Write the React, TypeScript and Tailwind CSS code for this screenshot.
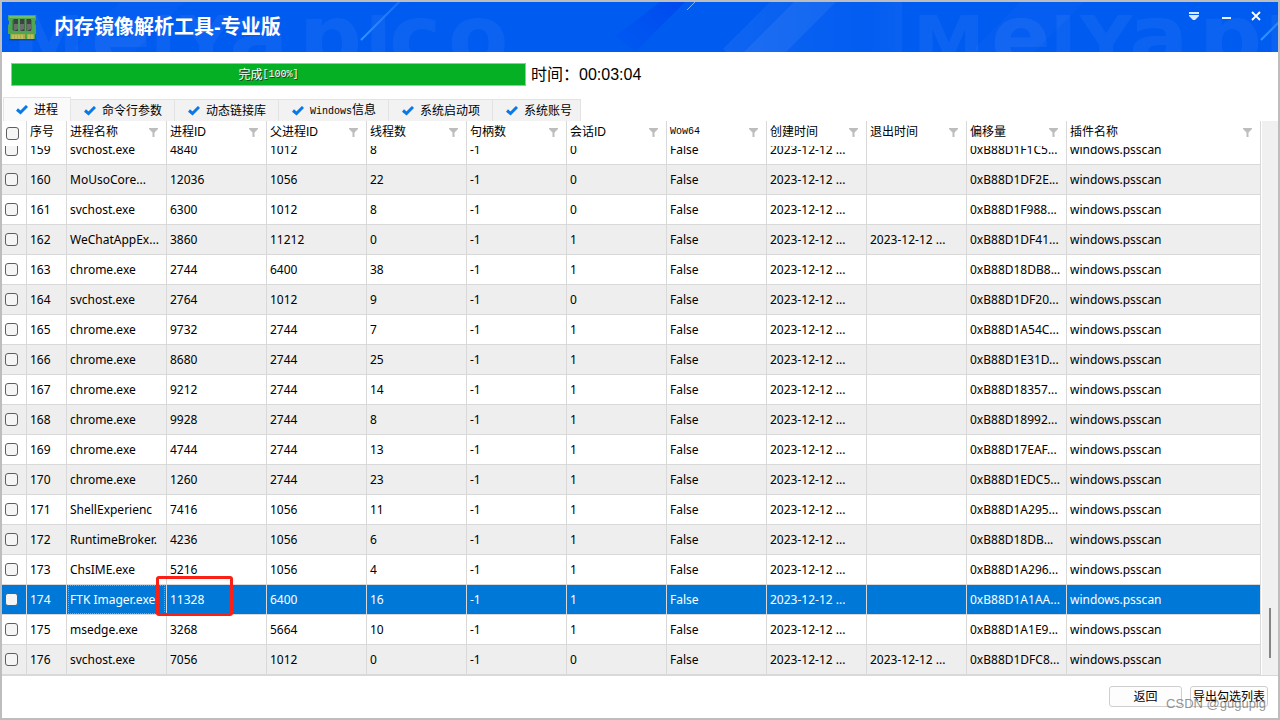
import React from "react";

const tabs = [
  { label: "进程" },
  { label: "命令行参数" },
  { label: "动态链接库" },
  { latin: "Windows", label: "信息" },
  { label: "系统启动项" },
  { label: "系统账号" },
];

const columns = [
  { label: "序号", filter: false },
  { label: "进程名称", filter: true },
  { label: "进程ID", filter: true },
  { label: "父进程ID", filter: true },
  { label: "线程数", filter: true },
  { label: "句柄数", filter: true },
  { label: "会话ID", filter: true },
  { label: "Wow64", filter: true, latin: true },
  { label: "创建时间", filter: true },
  { label: "退出时间", filter: true },
  { label: "偏移量", filter: true },
  { label: "插件名称", filter: true },
];

// no, name, pid, ppid, threads, session, exit time, offset
const processes = [
  ["159", "svchost.exe", "4840", "1012", "8", "0", "", "0xB88D1F1C5..."],
  ["160", "MoUsoCore...", "12036", "1056", "22", "0", "", "0xB88D1DF2E..."],
  ["161", "svchost.exe", "6300", "1012", "8", "0", "", "0xB88D1F988..."],
  ["162", "WeChatAppEx...", "3860", "11212", "0", "1", "2023-12-12 ...", "0xB88D1DF41..."],
  ["163", "chrome.exe", "2744", "6400", "38", "1", "", "0xB88D18DB8..."],
  ["164", "svchost.exe", "2764", "1012", "9", "0", "", "0xB88D1DF20..."],
  ["165", "chrome.exe", "9732", "2744", "7", "1", "", "0xB88D1A54C..."],
  ["166", "chrome.exe", "8680", "2744", "25", "1", "", "0xB88D1E31D..."],
  ["167", "chrome.exe", "9212", "2744", "14", "1", "", "0xB88D18357..."],
  ["168", "chrome.exe", "9928", "2744", "8", "1", "", "0xB88D18992..."],
  ["169", "chrome.exe", "4744", "2744", "13", "1", "", "0xB88D17EAF..."],
  ["170", "chrome.exe", "1260", "2744", "23", "1", "", "0xB88D1EDC5..."],
  ["171", "ShellExperienc", "7416", "1056", "11", "1", "", "0xB88D1A295..."],
  ["172", "RuntimeBroker.", "4236", "1056", "6", "1", "", "0xB88D18DB..."],
  ["173", "ChsIME.exe", "5216", "1056", "4", "1", "", "0xB88D1A296..."],
  ["174", "FTK Imager.exe", "11328", "6400", "16", "1", "", "0xB88D1A1AA..."],
  ["175", "msedge.exe", "3268", "5664", "10", "1", "", "0xB88D1A1E9..."],
  ["176", "svchost.exe", "7056", "1012", "0", "0", "2023-12-12 ...", "0xB88D1DFC8..."],
];

const SELECTED = "174";

const brandLetters = [
  { ch: "M", x: 11, size: 72 },
  { ch: "e", x: 89, size: 88 },
  { ch: "I", x: 148, size: 72 },
  { ch: "Y", x: 178, size: 72 },
  { ch: "a", x: 227, size: 88 },
  { ch: "p", x: 297, size: 88 },
  { ch: "I", x: 363, size: 72 },
  { ch: "c", x: 387, size: 88 },
  { ch: "o", x: 446, size: 88 },
];

const BannerTile = ({ x }: { x: number }) => (
  <g transform={`translate(${x} 0)`}>
    <polygon points="118,0 182,0 132,50 76,50 73,46" fill="#fff" opacity="0.02" />
    <polygon points="658,0 683,0 633,50 614,34" fill="url(#shade)" />
    <polygon points="768,0 900,0 900,50 724,50 721,47" fill="url(#haze)" />
    <polygon points="792,0 834,0 784,50 742,50" fill="#fff" opacity="0.06" />
    {brandLetters.map((l) => (
      <text
        key={l.x}
        x={l.x}
        y="65"
        fontSize={l.size}
        fontWeight="700"
        fontFamily="'DejaVu Sans', sans-serif"
        fill="#fff"
        opacity="0.05"
      >
        {l.ch}
      </text>
    ))}
    <line x1="359" y1="38" x2="398" y2="-1" stroke="url(#streak)" strokeWidth="2" />
    <line x1="685" y1="8" x2="694" y2="-1" stroke="#7db4ff" strokeWidth="1" />
  </g>
);

const Banner = () => (
  <svg className="absolute inset-0 size-full" aria-hidden="true">
    <defs>
      <linearGradient id="streak" x1="0" y1="1" x2="1" y2="0">
        <stop offset="0" stopColor="#2f97ff" />
        <stop offset="1" stopColor="#1a6cf5" />
      </linearGradient>
      <linearGradient id="shade" x1="0" y1="1" x2="1" y2="0">
        <stop offset="0" stopColor="#0050f0" stopOpacity="0.2" />
        <stop offset="1" stopColor="#0046ee" stopOpacity="0.9" />
      </linearGradient>
      <linearGradient id="haze">
        <stop offset="0" stopColor="#fff" stopOpacity="0.06" />
        <stop offset="0.8" stopColor="#fff" stopOpacity="0.01" />
        <stop offset="1" stopColor="#fff" stopOpacity="0.04" />
      </linearGradient>
    </defs>
    <BannerTile x={0} />
    <BannerTile x={900} />
  </svg>
);

const MemoryIcon = () => (
  <svg width="28" height="28" viewBox="0 0 28 28" aria-hidden="true">
    <path d="M1 26h26v1.500H1z" fill="#063b9c" opacity="0.6" />
    <path d="M0 2h28v5l-1 1v3l1 1v9h-1v5H2v-5H0v-9l1-1V8L0 7z" fill="#4ea552" />
    <path d="M1 3h26v2H1z" fill="#6fbe6c" />
    <path d="M3 21h14v5H3zM19 21h7v5h-7z" fill="#a9ad4b" />
    <path d="M5 22v4M8 22v4M11 22v4M14 22v4M21 22v4M24 22v4" stroke="#d2cf79" />
    <path d="M4 8h2M4 10h2M4 12h2M4 14h2M4 16h2M24 8h-2M24 10h-2M24 12h-2M24 14h-2M24 16h-2" stroke="#2c6c33" />
    <path d="M5.500 6h4.500v12H5.500zM12 6h4.500v12H12zM18.500 6h4.500v12h-4.500z" fill="#3f4143" />
    <path d="M6 11h4v5l-4 2zM12 11h4v5l-4 2zM19 11h4v5l-4 2z" fill="#6b6e70" />
  </svg>
);

const CheckIcon = () => (
  <svg width="12" height="10" viewBox="0 0 12 10" className="shrink-0" aria-hidden="true">
    <path d="M1 4.500l3.500 3L11 1" fill="none" stroke="#0a78e6" strokeWidth="3" />
  </svg>
);

const FilterIcon = () => (
  <svg width="9" height="9" viewBox="0 0 9 9" className="shrink-0" aria-hidden="true">
    <path d="M0 0h9v1L5.500 4.500V9h-2V4.500L0 1z" fill="#bdbdbd" />
  </svg>
);

const boxStyle =
  "block size-[13px] appearance-none rounded-[3px] border border-[#5f5f5f] bg-[#f5f5f5]";

const TitleBar = () => (
  <header className="relative flex h-[50px] items-center bg-[#005bf1] pl-1.5">
    <Banner />
    <div className="relative flex grow items-center gap-[18px]">
      <MemoryIcon />
      <h1 className="text-[20px] leading-6 font-bold text-white">内存镜像解析工具-专业版</h1>
    </div>
    <div className="relative flex gap-3 self-start pt-1 pr-3.5 text-white">
      <button className="flex size-5 items-center justify-center" aria-label="菜单">
        <svg width="10" height="8" viewBox="0 0 10 8">
          <path d="M0 0h10v2H0zM0 3h10v1L6 8H4L0 4z" fill="#dce8ff" />
        </svg>
      </button>
      <button className="flex size-5 items-center justify-center" aria-label="最小化">
        <svg width="9" height="6" viewBox="0 0 9 6">
          <path d="M0 4h9v2H0z" fill="#e8f0ff" />
        </svg>
      </button>
      <button className="flex h-5 w-4 items-center justify-center" aria-label="关闭">
        <svg width="10" height="10" viewBox="0 0 10 10">
          <path d="M1 1l8 8M9 1l-8 8" stroke="#fff" strokeWidth="1.800" />
        </svg>
      </button>
    </div>
  </header>
);

const Status = () => (
  <div className="flex items-center gap-[5px] px-[9px] pt-[11px]">
    <div
      role="progressbar"
      aria-valuenow={100}
      aria-label="解析进度"
      className="flex h-[23px] w-[515px] items-center justify-center border border-[#b4b4b4] bg-[#06b025] text-xs text-white [text-shadow:1px_1px_0_#333]"
    >
      完成<span className="font-['Liberation_Mono'] text-[10px]">[100%]</span>
    </div>
    <p className="text-base leading-5">时间：00:03:04</p>
  </div>
);

const TabBar = () => (
  <div role="tablist" className="flex h-6 items-end pl-px">
    {tabs.map((tab, i) => (
      <button
        key={tab.label}
        role="tab"
        aria-selected={i === 0}
        className={
          i === 0
            ? "flex h-6 items-center gap-1.5 border border-b-0 border-[#e5e5e5] bg-[#fafafa] px-3 text-xs"
            : "flex h-[22px] items-center gap-1.5 border-t border-r border-[#e3e3e3] bg-[#f2f2f2] pr-3 pl-[13px] text-xs last:pr-2"
        }
      >
        <CheckIcon />
        <span>
          {tab.latin && <span className="font-['Liberation_Mono'] text-[10px]">{tab.latin}</span>}
          {tab.label}
        </span>
      </button>
    ))}
  </div>
);

const ProcessTable = () => {
  const cell = "border-r border-b border-[#d9d9d9] p-0";
  return (
    <table className="w-full grow table-fixed border-separate border-spacing-0 text-xs">
      <colgroup>
        <col className="w-[25px]" />
        <col className="w-10" />
        {columns.slice(1, 11).map((c) => (
          <col key={c.label} className="w-[100px]" />
        ))}
        <col />
      </colgroup>
      <thead>
        <tr className="h-[25px] align-top">
          <th className="border-r border-[#d9d9d9] p-0 pt-1.5 pl-1">
            <input type="checkbox" aria-label="全选" className={boxStyle} />
          </th>
          {columns.map((c) => (
            <th key={c.label} className="border-r border-[#d9d9d9] p-0 font-normal">
              <div className="flex h-[22px] items-center justify-between pr-2 pl-[3px]">
                <span className={c.latin ? "font-['Liberation_Mono'] text-[10px]" : ""}>{c.label}</span>
                {c.filter && <FilterIcon />}
              </div>
            </th>
          ))}
        </tr>
      </thead>
      <tbody className="font-['Noto_Sans','Noto_Sans_CJK_SC',sans-serif]">
        {processes.map(([no, name, pid, ppid, threads, session, exit, offset], i) => {
          const selected = no === SELECTED;
          const values = [no, name, pid, ppid, threads, "-1", session, "False", "2023-12-12 ...", exit, offset, "windows.psscan"];
          // the first row is scrolled part of the way under the header
          const clip = i === 0 ? "flex h-[18px] items-end overflow-hidden" : "flex h-[29px] items-end";
          return (
            <tr
              key={no}
              className={selected ? "bg-[#0078d7] text-white" : i % 2 ? "bg-[#eeeeee]" : "bg-white"}
            >
              <td className={cell}>
                <div className={clip}>
                  <div className="flex h-[29px] shrink-0 items-center pl-[3px]">
                    <input type="checkbox" aria-label={no} className={boxStyle} />
                  </div>
                </div>
              </td>
              {values.map((value, j) => (
                <td key={j} className={selected && j === 2 ? `${cell} relative` : cell}>
                  <div className={clip}>
                    <div
                      className={
                        selected && j === 1
                          ? "mx-px flex h-[29px] grow items-center overflow-hidden border border-dotted border-[#ff8420] pl-px whitespace-nowrap"
                          : "flex h-[29px] min-w-0 grow shrink-0 items-center overflow-hidden pl-[3px] whitespace-nowrap"
                      }
                    >
                      {value}
                    </div>
                  </div>
                  {selected && j === 2 && (
                    <div className="pointer-events-none absolute -top-[9px] -left-[11px] h-10 w-[77px] rounded-[3px] border-3 border-[#fb2016]" />
                  )}
                </td>
              ))}
            </tr>
          );
        })}
      </tbody>
    </table>
  );
};

const Footer = () => (
  <footer className="relative flex justify-end gap-2 px-2.5 pt-2.5 pb-[11px] text-xs">
    <button className="h-[21px] w-[73px] rounded-[3px] border border-[#cfcfcf] bg-[#fdfdfd]">返回</button>
    <button className="h-[21px] w-[78px] rounded-[3px] border border-[#cfcfcf] bg-[#fdfdfd] whitespace-nowrap">
      导出勾选列表
    </button>
    <span className="pointer-events-none absolute right-3 bottom-1.5 text-[13px] leading-4 text-[#777]/80">
      CSDN @gugupig
    </span>
  </footer>
);

const App = () => {
  return (
    <div className="flex min-h-screen flex-col bg-[#bdbdbd] p-0.5 font-['Liberation_Sans','Noto_Sans_CJK_SC',sans-serif] text-black">
      <main className="flex grow flex-col bg-white">
        <TitleBar />
        <Status />
        <div className="pt-[11px]">
          <TabBar />
        </div>
        <div className="flex border-b border-[#d9d9d9]">
          <ProcessTable />
          <div className="flex w-[17px] shrink-0 flex-col items-center justify-end border-l border-white bg-[#f0f0f0] pb-[17px]">
            <div className="h-[50px] w-0.5 bg-[#858585]" />
          </div>
        </div>
        <Footer />
      </main>
    </div>
  );
};

export default App;
